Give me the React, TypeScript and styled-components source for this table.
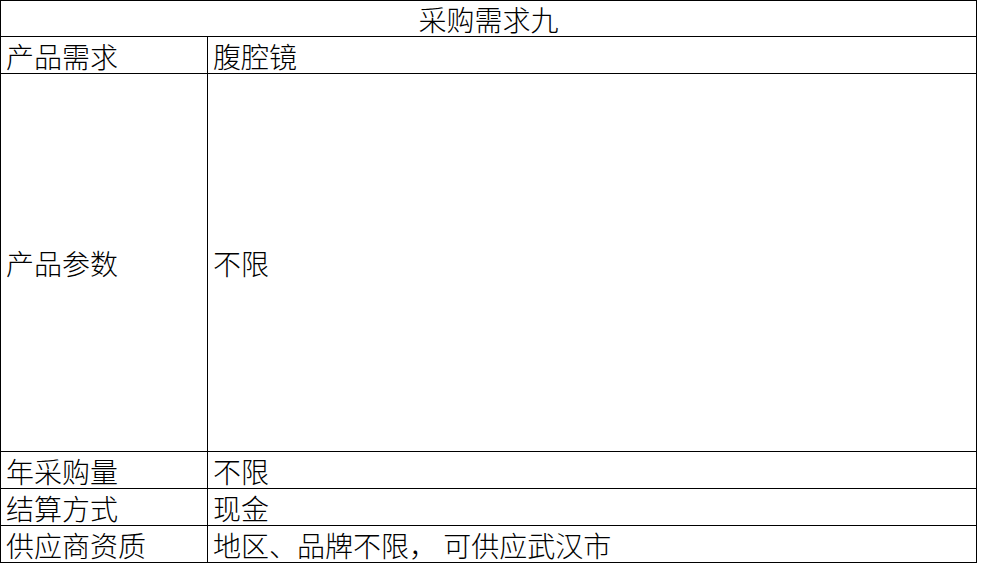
import React from "react";
import styled, { createGlobalStyle } from "styled-components";

const Global = createGlobalStyle`
  html, body { margin: 0; padding: 0; background: #fff; }
  body { font-family: "Noto Sans CJK SC", "Noto Sans", sans-serif; color: #000; }
`;

const Sheet = styled.div`
  display: grid;
  grid-template-columns: 207px 769px;
  width: 977px;
  box-sizing: border-box;
  border-left: 1px solid #000;
  border-top: 1px solid #000;
`;

const Cell = styled.div<{ $h: number; $span?: boolean; $center?: boolean }>`
  box-sizing: border-box;
  height: ${(p) => p.$h}px;
  grid-column: ${(p) => (p.$span ? "1 / span 2" : "auto")};
  border-right: 1px solid #000;
  border-bottom: 1px solid #000;
  display: flex;
  align-items: center;
  justify-content: ${(p) => (p.$center ? "center" : "flex-start")};
  padding: 1px 0 0 ${(p) => (p.$center ? 0 : 5)}px;
  font-size: 28px;
  font-weight: 300;
  line-height: 34px;
  white-space: pre;
`;

const rows: { label: string; value: string; h: number }[] = [
  { label: "产品需求", value: "腹腔镜", h: 37 },
  { label: "产品参数", value: "不限", h: 378 },
  { label: "年采购量", value: "不限", h: 37 },
  { label: "结算方式", value: "现金", h: 37 },
  { label: "供应商资质", value: "地区、品牌不限， 可供应武汉市", h: 37 },
];

export default function App() {
  return (
    <>
      <Global />
      <Sheet>
        <Cell $h={36} $span $center>
          采购需求九
        </Cell>
        {rows.map((r) => (
          <React.Fragment key={r.label}>
            <Cell $h={r.h}>{r.label}</Cell>
            <Cell $h={r.h}>{r.value}</Cell>
          </React.Fragment>
        ))}
      </Sheet>
    </>
  );
}
